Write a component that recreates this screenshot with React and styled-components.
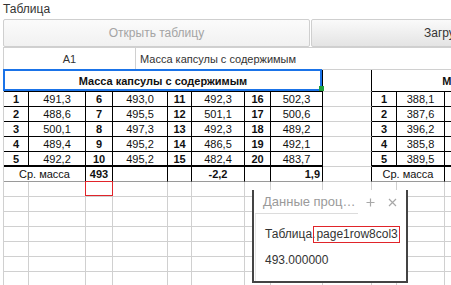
import React from "react";
import styled, { createGlobalStyle, css } from "styled-components";

const GRID = "#d0d0d0";
const INK = "#111";

const COLS = [25, 57, 27, 55, 24, 53, 26, 52, 49, 25, 48, 27, 55, 24, 53, 26, 52];

const TITLE = "Масса капсулы с содержимым";

const table1 = [
  [1, "491,3", 6, "493,0", 11, "492,3", 16, "502,3"],
  [2, "488,6", 7, "495,5", 12, "501,1", 17, "500,6"],
  [3, "500,1", 8, "497,3", 13, "492,3", 18, "489,2"],
  [4, "489,4", 9, "495,2", 14, "486,5", 19, "492,1"],
  [5, "492,2", 10, "495,2", 15, "482,4", 20, "483,7"],
];

const table2 = [
  [1, "388,1", 6, "", 11, "", 16, ""],
  [2, "387,6", 7, "", 12, "", 17, ""],
  [3, "396,2", 8, "", 13, "", 18, ""],
  [4, "385,8", 9, "", 14, "", 19, ""],
  [5, "389,5", 10, "", 15, "", 20, ""],
];

const GlobalStyle = createGlobalStyle`
  html, body {
    margin: 0;
    padding: 0;
    overflow: hidden;
    background: #fff;
  }
  body {
    font-family: "Liberation Sans", Arial, sans-serif;
    color: #333;
  }
`;

const Page = styled.div`
  width: 720px;
  padding-left: 3px;
`;

const Label = styled.div`
  height: 19px;
  box-sizing: border-box;
  padding-top: 1px;
  font-size: 12px;
  line-height: 16px;
  color: #333;
`;

const Toolbar = styled.div`
  display: flex;
  gap: 1px;
  height: 28px;
`;

const ToolButton = styled.button`
  flex: 0 0 ${p => p.$width || 307}px;
  box-sizing: border-box;
  height: 28px;
  margin: 0;
  padding: 0;
  border: 1px solid #cfcfcf;
  border-radius: 2px;
  font: inherit;
  font-size: 12px;
  color: ${p => (p.disabled ? "#a4a4a4" : "#333")};
  background: ${p =>
    p.disabled
      ? "linear-gradient(#fbfbfb, #f1f1f1)"
      : "linear-gradient(#fafafa, #e4e4e4)"};
`;

const FormulaBar = styled.div`
  display: flex;
  width: 679px;
  height: 23px;
  box-sizing: border-box;
  border: 1px solid ${GRID};
  border-right: none;
  font-size: 11px;
  color: #333;
`;

const NameBox = styled.div`
  flex: 0 0 131px;
  display: flex;
  align-items: center;
  justify-content: center;
  border-right: 1px solid ${GRID};
`;

const FormulaText = styled.div`
  display: flex;
  align-items: center;
  padding-left: 4px;
`;

const SheetArea = styled.div`
  position: relative;
`;

const Sheet = styled.div`
  display: grid;
  grid-template-columns: ${COLS.map(w => `${w}px`).join(" ")};
  grid-template-rows: 22px;
  grid-auto-rows: 15px;
  width: max-content;
  border-left: 1px solid ${GRID};
`;

const Cell = styled.div`
  position: relative;
  box-sizing: border-box;
  grid-column: span ${p => p.$span || 1};
  display: flex;
  align-items: center;
  justify-content: ${p => (p.$align === "right" ? "flex-end" : "center")};
  padding: 0 2px;
  border-right: 1px solid ${p => p.$rc || GRID};
  border-bottom: ${p => p.$bw || 1}px solid ${p => p.$bc || GRID};
  font-size: 11px;
  font-weight: ${p => (p.$bold ? 700 : 400)};
  color: ${INK};
  white-space: nowrap;

  ${p =>
    p.$selected &&
    css`
      &::after {
        content: "";
        position: absolute;
        top: -1px;
        left: -1px;
        right: 0;
        bottom: 0;
        border: 2px solid #1a73e8;
        z-index: 2;
      }
      &::before {
        content: "";
        position: absolute;
        right: -2px;
        bottom: 0;
        width: 5px;
        height: 5px;
        background: #1e9e3c;
        z-index: 3;
      }
    `}

  ${p =>
    p.$marked &&
    css`
      &::after {
        content: "";
        position: absolute;
        top: -1px;
        left: -1px;
        right: -1px;
        bottom: 0;
        border: 1px solid #e0242a;
        z-index: 2;
      }
    `}
`;

const Panel = styled.div`
  position: absolute;
  left: 249px;
  top: 120px;
  width: 156px;
  height: 93px;
  box-sizing: border-box;
  background: #fff;
  border: 2px solid #444;
  border-top: none;
  z-index: 5;
  display: flex;
  flex-direction: column;
`;

const PanelHeader = styled.div`
  display: flex;
  align-items: center;
  height: 24px;
  flex: 0 0 24px;
`;

const PanelTitle = styled.div`
  box-sizing: border-box;
  width: 103px;
  height: 24px;
  margin-left: 1px;
  padding-left: 8px;
  display: flex;
  align-items: center;
  border-bottom: 1px solid #dcdcdc;
  font-size: 13px;
  color: #9a9a9a;
  white-space: nowrap;
`;

const PanelTools = styled.div`
  display: flex;
  align-items: center;
  gap: 13px;
  margin-left: 8px;
`;

const PanelBody = styled.div`
  flex: 1;
  margin-left: 1px;
  border-left: 1px solid #e6e6e6;
  padding: 12px 0 0 9px;
  font-size: 12px;
  color: #333;
`;

const BodyLine = styled.div`
  line-height: 17px;
  white-space: nowrap;
  margin-top: ${p => p.$gap || 0}px;
`;

const Marked = styled.span`
  display: inline-block;
  line-height: 15px;
  padding: 0 1px 0 2px;
  margin-left: -2px;
  border: 1px solid #e0242a;
`;

const PlusIcon = () => (
  <svg width="9" height="9" viewBox="0 0 9 9">
    <path d="M0.5 4.5h8M4.5 0.5v8" stroke="#a8a8a8" strokeWidth="1.2" fill="none" />
  </svg>
);

const CloseIcon = () => (
  <svg width="9" height="9" viewBox="0 0 9 9">
    <path d="M1 1l7 7M8 1l-7 7" stroke="#a8a8a8" strokeWidth="1.2" fill="none" />
  </svg>
);

// one table block: 8 cells with black borders
function tableRow(values, last) {
  return values.map((v, i) => ({
    text: v,
    bold: i % 2 === 0,
    rc: "#000",
    bc: "#000",
    bw: last ? 2 : 1,
  }));
}

function buildRows() {
  const rows = [];

  rows.push([
    { text: TITLE, span: 8, bold: true, rc: "#000", bc: "#000", selected: true },
    { rc: "#000" },
    { text: TITLE, span: 8, bold: true, rc: "#000", bc: "#000" },
  ]);

  table1.forEach((r, i) => {
    const last = i === table1.length - 1;
    rows.push([...tableRow(r, last), { rc: "#000" }, ...tableRow(table2[i], last)]);
  });

  const avg = { rc: "#000", bc: "#9a9a9a" };
  rows.push([
    { ...avg, text: "Ср. масса", span: 2 },
    { ...avg, text: "493", bold: true },
    { ...avg },
    { ...avg },
    { ...avg, text: "-2,2", bold: true },
    { ...avg },
    { ...avg, text: "1,9", bold: true, align: "right" },
    { rc: "#000" },
    { ...avg, text: "Ср. масса", span: 2 },
    { ...avg },
    { ...avg },
    { ...avg },
    { ...avg },
    { ...avg },
    { ...avg },
  ]);

  for (let r = 0; r < 7; r++) {
    rows.push(COLS.map((_, c) => ({ marked: r === 0 && c === 2 })));
  }
  return rows;
}

export default function App() {
  const rows = buildRows();
  return (
    <Page>
      <GlobalStyle />
      <Label>Таблица</Label>
      <Toolbar>
        <ToolButton disabled>Открыть таблицу</ToolButton>
        <ToolButton $width={329}>Загрузить таблицу</ToolButton>
      </Toolbar>
      <FormulaBar>
        <NameBox>A1</NameBox>
        <FormulaText>{TITLE}</FormulaText>
      </FormulaBar>
      <SheetArea>
        <Sheet>
          {rows.map((row, ri) =>
            row.map((c, ci) => (
              <Cell
                key={`${ri}-${ci}`}
                $span={c.span}
                $bold={c.bold}
                $align={c.align}
                $rc={c.rc}
                $bc={c.bc}
                $bw={c.bw}
                $selected={c.selected}
                $marked={c.marked}
              >
                {c.text}
              </Cell>
            ))
          )}
        </Sheet>
        <Panel>
          <PanelHeader>
            <PanelTitle>Данные проц…</PanelTitle>
            <PanelTools>
              <PlusIcon />
              <CloseIcon />
            </PanelTools>
          </PanelHeader>
          <PanelBody>
            <BodyLine>
              Таблица.<Marked>page1row8col3</Marked>
            </BodyLine>
            <BodyLine $gap={9}>493.000000</BodyLine>
          </PanelBody>
        </Panel>
      </SheetArea>
    </Page>
  );
}
